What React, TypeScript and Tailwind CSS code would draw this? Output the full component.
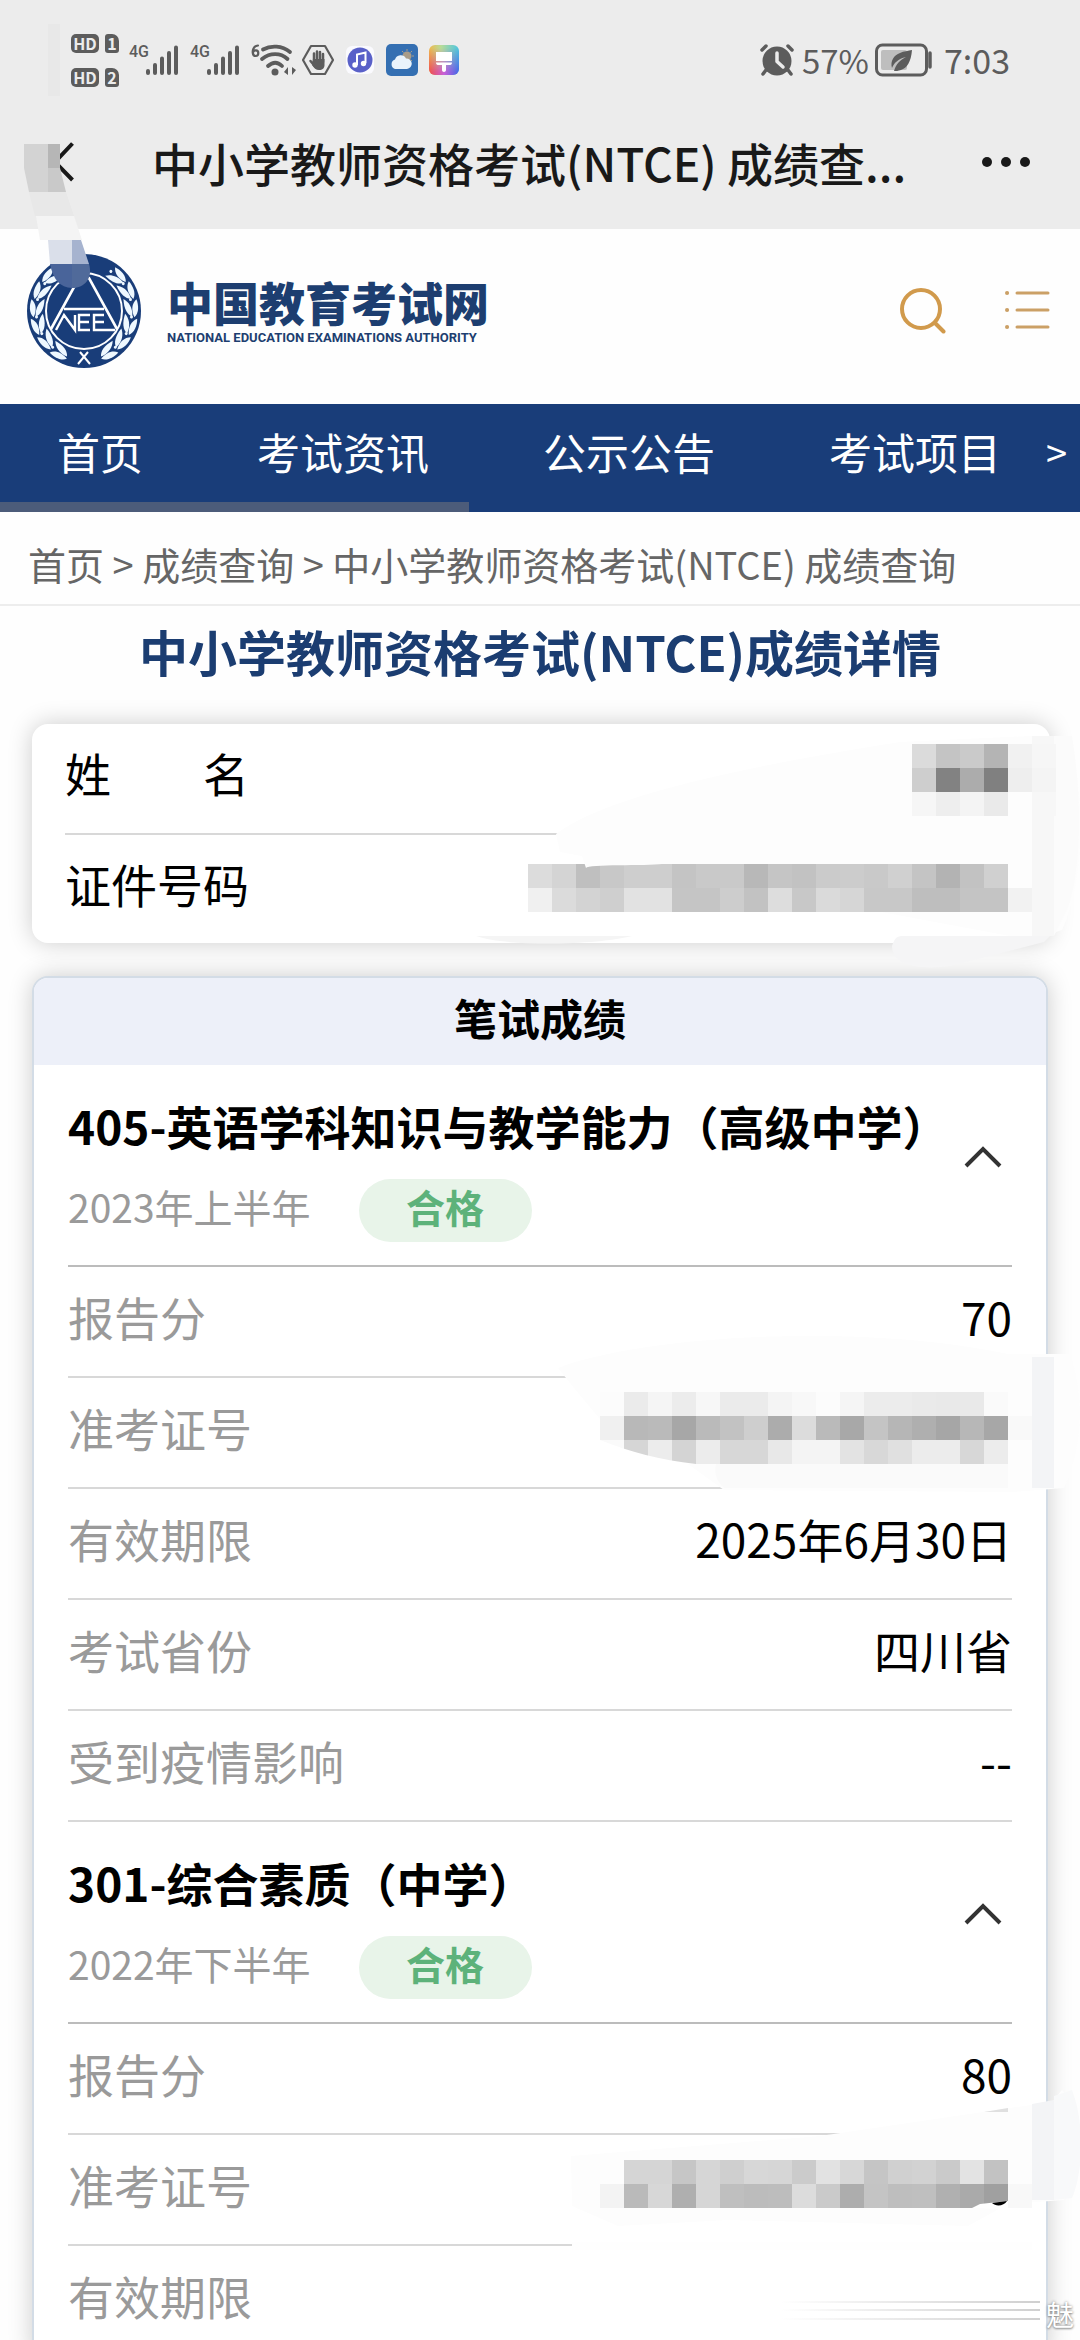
import type { ReactNode } from "react";

/**
 * NTCE score detail page, shown inside the in-app browser.
 *
 * Private values are covered with mosaic strokes. Every mosaic is drawn on the
 * same 24px grid, so a row of cells is just a start x, a y and a list of greys.
 */

type MosaicRow = { x: number; y: number; greys: string };

const CELL = 24;

const ID_CARD_MOSAIC: MosaicRow[] = [
  { x: 912, y: 744, greys: "DB C4 CA B4 F1 F6" },
  { x: 912, y: 768, greys: "CE 82 AC 80 EE F4" },
  { x: 912, y: 792, greys: "F6 EE F4 EA FD F7" },
  { x: 528, y: 864, greys: "DC D4 BF C8 CE CE C4 C9 C9 B8 C5 C2 CB CC C9 D0 C4 B3 C2 D0 FD" },
  { x: 528, y: 888, greys: "F0 DB D3 CF E2 E2 C5 C5 CD C2 DD C8 DA D6 C8 C8 BE BE C4 C4 F2" },
];

const TICKET_MOSAIC_A: MosaicRow[] = [
  { x: 600, y: 1392, greys: "FC EB F5 EC F7 EB EB F4 F8 FC F5 EC EC EA E9 E9 FA" },
  { x: 600, y: 1416, greys: "F0 B8 BA A7 BA C2 CE AC DC BA A8 C4 B6 AF A6 B7 A7 F9" },
  { x: 600, y: 1440, greys: "FA D6 EC D4 EC D7 D7 E8 F4 F4 E3 D8 E0 EC EC D7 EC" },
];

const TICKET_MOSAIC_B: MosaicRow[] = [
  { x: 624, y: 2160, greys: "D5 D5 C6 D6 CF D7 D6 CB E2 D7 C5 D0 D2 CA E3 C2" },
  { x: 600, y: 2184, greys: "F3 BA D7 AF D6 BF BC BD DC CA AD C4 BE BF B0 AA A0 F8" },
];

const NAV = ["首页", "考试资讯", "公示公告", "考试项目"];

type Subject = {
  name: string;
  term: string;
  rows: { label: string; value: string }[];
};

const SUBJECTS: Subject[] = [
  {
    name: "405-英语学科知识与教学能力（高级中学）",
    term: "2023年上半年",
    rows: [
      { label: "报告分", value: "70" },
      { label: "准考证号", value: "" },
      { label: "有效期限", value: "2025年6月30日" },
      { label: "考试省份", value: "四川省" },
      { label: "受到疫情影响", value: "--" },
    ],
  },
  {
    name: "301-综合素质（中学）",
    term: "2022年下半年",
    rows: [
      { label: "报告分", value: "80" },
      { label: "准考证号", value: "" },
      { label: "有效期限", value: "" },
    ],
  },
];

function Mosaic({ rows }: { rows: MosaicRow[] }) {
  return (
    <g shapeRendering="crispEdges">
      {rows.map((r) =>
        r.greys.split(" ").map((g, i) => (
          <rect key={`${r.y}-${i}`} x={r.x + i * CELL} y={r.y} width={CELL} height={CELL} fill={`#${g}${g}${g}`} />
        )),
      )}
    </g>
  );
}

/** Layer for strokes drawn over the content; `top` is the y of its parent on the grid. */
function Strokes({ top, height, children }: { top: number; height: number; children: ReactNode }) {
  return (
    <svg
      aria-hidden="true"
      className="pointer-events-none absolute right-0 top-0 z-10"
      width="1080"
      height={height}
      viewBox={`0 ${top} 1080 ${height}`}
    >
      {children}
    </svg>
  );
}

function HdBadge({ sim }: { sim: string }) {
  return (
    <span className="flex gap-1.5 text-center text-[16px] font-bold leading-[19px] text-[#ececec]">
      <span className="w-7 rounded-[5px] bg-[#5c5c5c]">HD</span>
      <span className="w-3.5 rounded-[3px] rounded-tr-[7px] bg-[#5c5c5c]">{sim}</span>
    </span>
  );
}

function Signal() {
  return (
    <span className="flex items-start text-[16px] leading-[16px]">
      <span className="w-[17px] font-['Roboto',sans-serif] font-medium">4G</span>
      <svg width="34" height="32" viewBox="0 0 34 32" stroke="currentColor" strokeWidth="4" strokeLinecap="round">
        <path d="M2 27v2M9 21v8M16 14.500v14.500M23 9v20M30 3.500v25.500" />
      </svg>
    </span>
  );
}

function StatusBar() {
  return (
    <div className="flex h-[104px] items-center pl-[71px] pr-[70px] pt-4 text-[#5c5c5c]">
      <div className="flex flex-col gap-[15px]">
        <HdBadge sim="1" />
        <HdBadge sim="2" />
      </div>
      <div className="ml-2.5 flex items-center gap-2.5">
        <Signal />
        <Signal />
        {/* wifi 6 */}
        <svg width="46" height="34" viewBox="0 0 46 34" fill="none" stroke="currentColor" strokeWidth="3.800" strokeLinecap="round">
          <path d="M7 2.500C2 3 1.500 8 1.800 10c.5 4 5.500 4 5.500 0 0-3.500-4.500-3.500-5.300-.5" strokeWidth="2.200" />
          <path d="M12 6.500C20 2 31 2.500 39 9M11 16c8-6.500 18.500-6.500 25.500 0M17 23c5-4.500 9.500-4.500 14 0" />
          <circle cx="24" cy="29" r="3.500" fill="currentColor" stroke="none" />
          <path d="M37 24v8l-4-3zM41 32v-8l4 3z" fill="currentColor" stroke="none" />
        </svg>
      </div>
      <svg className="ml-[5px]" width="32" height="32" viewBox="0 0 32 32" fill="none" stroke="currentColor">
        <path d="M9 2h14l8 14-8 14H9L1 16z" strokeWidth="2.200" strokeLinejoin="round" />
        <path d="M12 18V9.500M15 17V7.500M18 17V8M21 18v-8M8.500 17l5 6" strokeWidth="2.500" strokeLinecap="round" />
        <path d="M11 15h11.500v6c0 3-2 5-5.500 5-3 0-5-2-7-5z" fill="currentColor" stroke="none" />
      </svg>
      <svg className="ml-3" width="28" height="28" viewBox="0 0 28 28">
        <rect width="28" height="28" rx="6" fill="#fafafe" />
        <circle cx="14" cy="14" r="12.500" fill="#5960c8" />
        <path d="M11 19V8.500l8.500-2V17" fill="none" stroke="#fff" strokeWidth="2" />
        <circle cx="9" cy="19" r="2.700" fill="#fff" />
        <circle cx="17.500" cy="17.500" r="2.700" fill="#fff" />
      </svg>
      <svg className="ml-3" width="32" height="32" viewBox="0 0 32 32">
        <rect width="32" height="32" rx="5" fill="#346fb2" />
        <circle cx="21" cy="12" r="4.500" fill="#a89c88" />
        <path d="M21 5v2M28 12h-2M16 7l1.500 1.500M26 7l-1.500 1.500M26 17l-1.500-1.500" stroke="#a89c88" />
        <path d="M9 25a5 5 0 0 1 0-9.500 6 6 0 0 1 11-1 5 5 0 0 1 1 10.500z" fill="#e9f3fb" />
      </svg>
      <svg className="ml-[11px]" width="30" height="30" viewBox="0 0 30 30">
        <defs>
          <linearGradient id="brushTop" x1="0" y1="0" x2="1" y2="0">
            <stop offset="0" stopColor="#f0b84c" />
            <stop offset="0.400" stopColor="#b8dc98" />
            <stop offset="1" stopColor="#4cc4e0" />
          </linearGradient>
          <linearGradient id="brushBottom" x1="0" y1="0" x2="1" y2="0">
            <stop offset="0" stopColor="#f0504c" />
            <stop offset="0.500" stopColor="#c860d8" />
            <stop offset="1" stopColor="#4468e8" />
          </linearGradient>
          <linearGradient id="brushFade" x1="0" y1="0" x2="0" y2="1">
            <stop offset="0.100" stopColor="#000" />
            <stop offset="0.900" stopColor="#fff" />
          </linearGradient>
          <mask id="brushMask">
            <rect width="30" height="30" fill="url(#brushFade)" />
          </mask>
        </defs>
        <rect width="30" height="30" rx="6" fill="url(#brushTop)" />
        <rect width="30" height="30" rx="6" fill="url(#brushBottom)" mask="url(#brushMask)" />
        <path d="M7 7h16v9H7z" fill="#fff" />
        <path d="M7 17.500h16c0 2-1 2.500-3 2.500h-3v5c0 2.500-4 2.500-4 0v-5h-3c-2 0-3-.5-3-2.500z" fill="#fff" />
      </svg>

      <div className="ml-auto flex items-center">
        <svg width="34" height="32" viewBox="0 0 34 32" fill="none" stroke="currentColor" strokeLinecap="round">
          <circle cx="17" cy="17" r="14.500" fill="currentColor" stroke="none" />
          <path d="M2 6l4-4M32 6l-4-4M6 26l-3 4M28 26l3 4" strokeWidth="3.500" />
          <path d="M17 9v8.500l6 5.500" stroke="#ececec" strokeWidth="3.500" strokeLinejoin="round" />
        </svg>
        <span className="ml-2 text-[33px] leading-10">57%</span>
        <svg className="ml-1.5" width="57" height="34" viewBox="0 0 57 34">
          <rect x="1.500" y="2" width="50" height="30" rx="6" fill="none" stroke="currentColor" strokeWidth="3" />
          <rect x="6" y="7" width="26" height="20" rx="2" fill="#bebebe" />
          <path d="M37 7c-1 12-5 18-11 20-3 1-5 1-7 1 2-7 6-11 12-14-8 2-12 6-14 11-2-7 2-13 8-15 4-2 8-2 12-3z" fill="currentColor" />
          <path d="M55 10v14" stroke="currentColor" strokeWidth="3.500" strokeLinecap="round" />
        </svg>
        <span className="ml-3 text-[34px] leading-10">7:03</span>
      </div>
    </div>
  );
}

function TitleBar() {
  return (
    <div className="flex h-[125px] items-center pb-2.5 pl-[58px] pr-[50px] text-[#191919]">
      <button type="button" aria-label="返回">
        <svg width="16" height="40" viewBox="0 0 16 40" fill="none" stroke="currentColor" strokeWidth="4">
          <path d="M14.500 1.500L-3 20l17.500 18" />
        </svg>
      </button>
      <h1 className="ml-[78px] truncate text-[46px] font-medium leading-[64px]">中小学教师资格考试(NTCE) 成绩查...</h1>
      <button type="button" aria-label="更多" className="ml-auto flex gap-[9px]">
        <span className="h-2.5 w-2.5 rounded-full bg-current" />
        <span className="h-2.5 w-2.5 rounded-full bg-current" />
        <span className="h-2.5 w-2.5 rounded-full bg-current" />
      </button>
    </div>
  );
}

// Leaf pairs of the laurel, as degrees from the bottom of the emblem.
const LEAVES = [30, 51, 72, 93, 114, 135];

function Emblem() {
  return (
    <svg width="114" height="114" viewBox="-57 -57 114 114" role="img" aria-label="NEEA">
      <circle r="57" fill="#193d79" />
      <g fill="#eef8ff">
        {[1, -1].map((side) =>
          LEAVES.map((deg) => (
            <g key={`${side}-${deg}`} transform={`scale(${side} 1) rotate(${-deg}) translate(0 46)`}>
              <path d="M-8 2C-6-3 0-6 10-6 7-1 1 3-8 2z" />
              <path d="M-9 4C-2 1 5 2 9 7 3 9-5 9-9 4z" />
              <circle cx="9" cy="1" r="1.500" />
            </g>
          )),
        )}
      </g>
      <g fill="none" stroke="#fff" strokeWidth="2">
        <circle r="38" />
        <path d="M-33 18L-5-33h10L33 18M-20-2h40" strokeWidth="2.600" />
        <path d="M-6 53L4 41M6 53L-4 41" />
        <path d="M-28 19l8-15 11 15V4M6 4H-5v15H6M-5 11H5M20 4H10v15h21M10 11h10" strokeWidth="2.400" />
      </g>
    </svg>
  );
}

function SiteHeader() {
  return (
    <header className="flex h-[175px] items-center pb-[11px] pl-[27px] pr-[30px]">
      <Emblem />
      <a href="#" className="ml-[26px] flex flex-col gap-1 text-[#1d3e70]">
        <span className="text-[46px] font-black leading-[50px]">中国教育考试网</span>
        <span className="whitespace-nowrap font-['Roboto',sans-serif] text-[13px] font-bold leading-[16px]">
          NATIONAL EDUCATION EXAMINATIONS AUTHORITY
        </span>
      </a>
      <button type="button" aria-label="搜索" className="ml-auto">
        <svg width="46" height="46" viewBox="0 0 46 46" fill="none" stroke="#d19a4c" strokeWidth="4" strokeLinecap="round">
          <circle cx="21" cy="21" r="19" />
          <path d="M35 35l8.500 8.500" />
        </svg>
      </button>
      <button type="button" aria-label="菜单" className="ml-[58px]">
        <svg width="46" height="46" viewBox="0 0 46 46" stroke="#cba066" strokeWidth="3" strokeLinecap="round">
          <path d="M13 5h31M13 22h31M13 39h31" />
          <path d="M3 5h.1M3 22h.1M3 39h.1" strokeWidth="4" />
        </svg>
      </button>
    </header>
  );
}

function Nav() {
  return (
    <nav className="bg-[#193d79] text-[43px] text-white">
      <div className="flex h-[98px] items-center whitespace-nowrap pb-1">
        {NAV.map((item) => (
          <a key={item} href="#" className="shrink-0 px-[57px]">
            {item}
          </a>
        ))}
        <button type="button" aria-label="下一组" className="-ml-3 text-[38px]">
          &gt;
        </button>
      </div>
      <div className="h-2.5 w-[469px] bg-[#4c5c7a]" />
    </nav>
  );
}

function IdentityCard() {
  return (
    <section className="relative pb-[33px] pl-8 pr-[30px]">
      <dl className="rounded-2xl bg-white px-[33px] text-[46px] leading-[64px] shadow-[0_0_24px_rgba(0,0,0,0.2)]">
        <div className="flex h-[111px] items-center border-b-2 border-[#d8d8d8] pb-3.5">
          <dt className="whitespace-pre">姓　　名</dt>
          <dd />
        </div>
        <div className="flex h-[108px] items-center pb-3">
          <dt>证件号码</dt>
          <dd />
        </div>
      </dl>
      <Strokes top={724} height={252}>
        <path d="M556 834C600 800 720 770 900 742L1030 736H1070C1085 800 1085 880 1062 930L1032 940 560 852z" fill="#fdfdfd" />
        <path d="M1032 736h22v200h-22z" fill="#f7f7f7" />
        <path d="M1054 736h18c10 60 10 130-4 172l-14 28z" fill="#fbfbfb" />
        <Mosaic rows={ID_CARD_MOSAIC} />
        <path d="M586 868c2-4 60-2 76-4v-8h-80z" fill="#fdfdfd" />
        <path d="M476 936h156c-30 8-120 12-156 0z" fill="#f5f5f5" />
        <path d="M892 946c2-6 4-10 10-10h148l-6 6-94 24c-30 4-58 0-58-20z" fill="#f5f5f6" />
      </Strokes>
    </section>
  );
}

function SubjectBlock({ subject }: { subject: Subject }) {
  return (
    <article className="px-[34px]">
      <div className="flex items-start justify-between border-b-2 border-[#bcbcbc] pb-[23px] pt-7">
        <div>
          <h3 className="whitespace-nowrap text-[46px] font-bold leading-[64px]">{subject.name}</h3>
          <p className="mt-[22px] flex items-center gap-12 text-[39px] leading-[63px] text-[#9a9a9a]">
            <span className="-mt-2">{subject.term}</span>
            <span className="w-[173px] rounded-full bg-[#e8f4e9] pb-2 text-center font-bold leading-[55px] text-[#5db27a]">
              合格
            </span>
          </p>
        </div>
        <button type="button" aria-label="收起" className="mr-2.5 mt-[52px]">
          <svg width="38" height="24" viewBox="0 0 38 24" fill="none" stroke="#333" strokeWidth="4">
            <path d="M2 21L19 4l17 17" />
          </svg>
        </button>
      </div>
      <dl className="text-[46px] leading-[64px]">
        {subject.rows.map((row) => (
          <div key={row.label} className="flex h-[111px] items-center justify-between border-b-2 border-[#d8d8d8] pb-3">
            <dt className="text-[#9a9a9a]">{row.label}</dt>
            <dd>{row.value}</dd>
          </div>
        ))}
      </dl>
    </article>
  );
}

function WrittenScores() {
  return (
    <section className="relative px-8">
      <div className="overflow-hidden rounded-2xl border-2 border-[#d3dce6] bg-white shadow-[0_0_24px_rgba(0,0,0,0.2)]">
        <h2 className="h-[87px] bg-[#edf0f9] text-center text-[43px] font-bold leading-[78px]">笔试成绩</h2>
        {SUBJECTS.map((s) => (
          <SubjectBlock key={s.name} subject={s} />
        ))}
      </div>
      <Strokes top={976} height={1364}>
        <path d="M558 1368C640 1336 860 1322 1008 1354h62c14 40 14 90-6 134l-50 4-290-2-50-36-70-30-30-36z" fill="#fdfdfd" />
        <path d="M1032 1357h22v131h-22z" fill="#f3f4f6" />
        <Mosaic rows={TICKET_MOSAIC_A} />
        <path d="M716 1464h292v24H724c-8-8-10-14-8-24z" fill="#fafafa" />
        <path d="M600 1440c30 12 60 20 96 24h-96z" fill="#fff" />

        <path d="M820 2136l190-28 42-6 10-12c20 20 20 80 2 110l-56 4-40 22-240-6-110 6-46-20-1-50z" fill="#fdfdfd" />
        <path d="M1032 2104l22-4v100h-22z" fill="#f3f4f6" />
        <path d="M984 2112l24-4v4z" fill="#e0e0e0" />
        <path d="M1054 2096l18-6c12 30 12 80 0 108l-18 2z" fill="#f8f9fa" />
        <Mosaic rows={TICKET_MOSAIC_B} />
        <path d="M972 2208l8-4 28-3v8z" fill="#fff" />
        <path d="M992 2203l15-2c-3 5-11 6-15 2z" fill="#000" />
        <path d="M572 2242h460v8H572z" fill="#fefefe" />

        <defs>
          <linearGradient id="streak" gradientUnits="userSpaceOnUse" x1="780" y1="0" x2="1040" y2="0">
            <stop offset="0" stopColor="#bbb" stopOpacity="0" />
            <stop offset="1" stopColor="#bbb" stopOpacity="0.700" />
          </linearGradient>
        </defs>
        <path d="M780 2302h260M780 2310h260M780 2319h260" stroke="url(#streak)" strokeWidth="2" />
      </Strokes>
    </section>
  );
}

export default function App() {
  return (
    <div className="relative h-screen overflow-hidden bg-[#fefefe] font-['Noto_Sans_CJK_SC',sans-serif] text-black">
      <div className="bg-[#ececec]">
        <StatusBar />
        <TitleBar />
      </div>
      <SiteHeader />
      <Nav />
      <div className="border-b-2 border-[#ededed] pl-7 pt-3 text-[38px] leading-[80px] text-[#666]">
        <a href="#">首页</a> &gt; <a href="#">成绩查询</a> &gt; <a href="#">中小学教师资格考试(NTCE) 成绩查询</a>
      </div>
      <h2 className="mb-[29px] text-center text-[49px] font-bold leading-[89px] text-[#1b3d71]">
        中小学教师资格考试(NTCE)成绩详情
      </h2>
      <IdentityCard />
      <WrittenScores />

      {/* stroke down the top-left corner */}
      <svg aria-hidden="true" className="pointer-events-none absolute left-0 top-0" width="100" height="300" viewBox="0 0 100 300">
        <path d="M48 24h12v72H48z" fill="#e8e8e8" />
        <path d="M24 144h24v48H29l-5-24z" fill="#d3d3d3" />
        <path d="M48 144h12v24H48z" fill="#b6b6b6" />
        <path d="M48 168h12l6 24H48z" fill="#c9c9c9" />
        <path d="M29 192h37l8 24H35z" fill="#e8e8e8" />
        <path d="M36 216h38l8 24H40z" fill="#f4f4f4" />
        <path d="M48 240h24v24H50z" fill="#dadfea" />
        <path d="M72 240h9l8 24H72z" fill="#a6b3cf" />
        <path d="M50 264h22v24c-12 0-19-9-22-24z" fill="#49649a" />
        <path d="M72 264h17c4 14-4 24-17 24z" fill="#506a9a" />
      </svg>

      <span className="absolute bottom-2.5 right-1.5 z-20 text-[28px] leading-8 text-white [text-shadow:0_0_3px_#888,0_1px_2px_#999]">
        魅
      </span>
    </div>
  );
}
